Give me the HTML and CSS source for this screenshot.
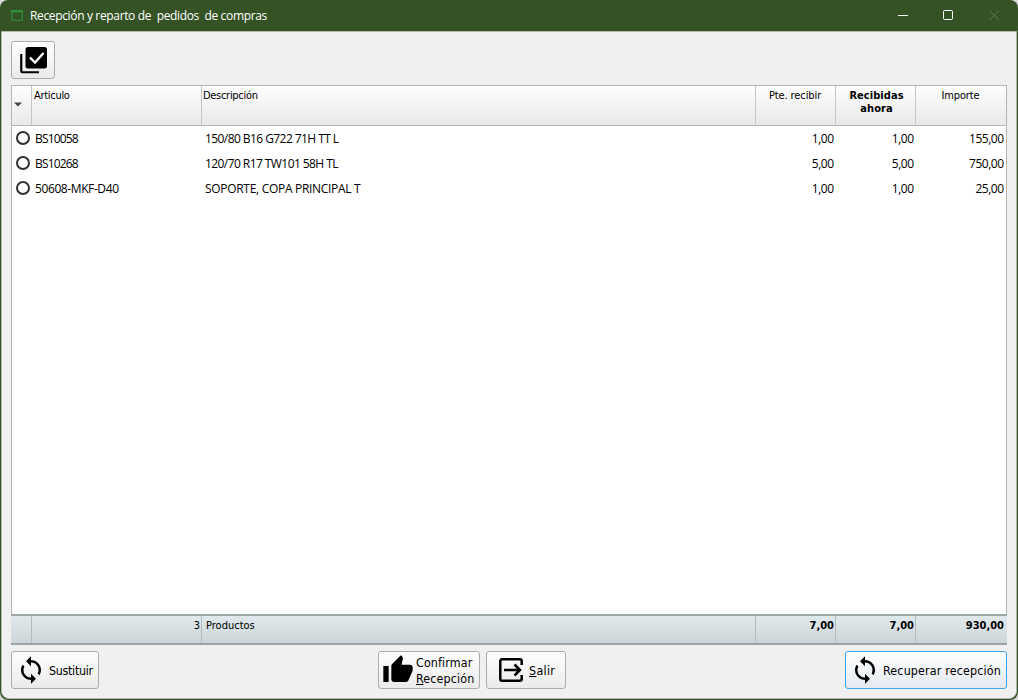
FILE: index.html
```html
<!DOCTYPE html>
<html lang="es">
<head>
<meta charset="utf-8">
<title>Recepción y reparto de pedidos de compras</title>
<link rel="stylesheet" href="styles.css">
</head>
<body>
<svg class="defs" width="0" height="0">
  <symbol id="sync" viewBox="0 0 24 24"><path d="M12 4V1L8 5l4 4V6c3.310 0 6 2.690 6 6 0 1.010-.25 1.970-.7 2.800l1.460 1.460C19.540 15.030 20 13.570 20 12c0-4.420-3.580-8-8-8zm0 14c-3.310 0-6-2.690-6-6 0-1.010.25-1.970.7-2.800L5.240 7.740C4.460 8.970 4 10.430 4 12c0 4.420 3.580 8 8 8v3l4-4-4-4v3z"/></symbol>
</svg>
<div class="window">
  <header class="titlebar">
    <svg class="app-icon" width="12" height="11" viewBox="0 0 12 11"><path d="M.75 1.500h10.500v8.750H.75z" fill="none" stroke="#328d3b" stroke-width="1.200"/><path d="M0 0h12v2.500H0z" fill="#328d3b"/></svg>
    <h1 class="title">Recepción y reparto de&nbsp; pedidos&nbsp; de compras</h1>
    <div class="controls">
      <svg width="46" height="31" viewBox="0 0 46 31"><path d="M18 15.500h10" stroke="#fff"/></svg>
      <svg width="46" height="31" viewBox="0 0 46 31"><rect x="17.500" y="10.500" width="9" height="9" rx="1" fill="none" stroke="#fff"/></svg>
      <svg width="46" height="31" viewBox="0 0 46 31"><path d="M17.500 10.500l9.500 9.500M27 10.500L17.500 20" stroke="#5c7650"/></svg>
    </div>
  </header>
  <main class="content">
    <button class="btn tool" aria-label="Marcar todo">
      <svg width="27" height="27" viewBox="0 0 27 27"><path d="M1.250 7v16.500a1.750 1.750 0 0 0 1.750 1.750H19" fill="none" stroke="#000" stroke-width="2.200"/><rect x="5.500" y="0" width="21.500" height="21.500" rx="2.500"/><path d="M10 10.500l5 5 8.500-9.500" fill="none" stroke="#fff" stroke-width="2.400"/></svg>
    </button>
    <section class="grid">
      <div class="row head">
        <div class="mark"><svg width="8" height="5" viewBox="0 0 8 5"><path d="M0 .5h8L4 4.500z" fill="#444"/></svg></div>
        <div class="articulo">Articulo</div>
        <div class="descripcion">Descripción</div>
        <div class="mid">Pte. recibir</div>
        <div class="mid strong">Recibidas<br>ahora</div>
        <div class="mid">Importe</div>
      </div>
      <div class="body">
        <div class="row item"><div><i class="ring"></i></div><div class="code">BS10058</div><div class="tire">150/80 B16 G722 71H TT L</div><div class="num">1,00</div><div class="num">1,00</div><div class="num">155,00</div></div>
        <div class="row item"><div><i class="ring"></i></div><div class="code">BS10268</div><div class="tire">120/70 R17 TW101 58H TL</div><div class="num">5,00</div><div class="num">5,00</div><div class="num">750,00</div></div>
        <div class="row item"><div><i class="ring"></i></div><div>50608-MKF-D40</div><div class="part">SOPORTE, COPA PRINCIPAL T</div><div class="num">1,00</div><div class="num">1,00</div><div class="num">25,00</div></div>
      </div>
      <div class="row foot"><div></div><div class="num">3</div><div class="prod">Productos</div><div class="num strong">7,00</div><div class="num strong">7,00</div><div class="num strong total">930,00</div></div>
    </section>
    <footer class="actions">
      <button class="btn replace"><svg width="30" height="30"><use href="#sync"/></svg><span>Sustituir</span></button>
      <button class="btn confirm">
        <svg width="32" height="32" viewBox="0 0 24 24"><path d="M1 21h4V9H1v12zm22-11c0-1.100-.9-2-2-2h-6.310l.95-4.570.03-.32c0-.41-.17-.79-.44-1.060L14.170 1 7.590 7.590C7.220 7.950 7 8.450 7 9v10c0 1.100.9 2 2 2h9c.83 0 1.540-.5 1.840-1.220l3.020-7.050c.09-.23.14-.47.14-.73v-2z"/></svg>
        <span>Confirmar<br><u>R</u>ecepción</span>
      </button>
      <button class="btn exit">
        <svg width="24" height="24" viewBox="0 0 24 24"><path d="M22.700 7V3a1.700 1.700 0 0 0-1.700-1.700H3A1.700 1.700 0 0 0 1.300 3v18A1.700 1.700 0 0 0 3 22.700h18a1.700 1.700 0 0 0 1.700-1.700v-4M5 12h16M15.500 6.500L21 12l-5.500 5.500" fill="none" stroke="#000" stroke-width="2.500"/></svg>
        <span><u>S</u>alir</span>
      </button>
      <button class="btn recover"><svg width="30" height="30"><use href="#sync"/></svg><span>Recuperar recepción</span></button>
    </footer>
  </main>
</div>
</body>
</html>
```
FILE: styles.css
```css
* { box-sizing: border-box; }
body { margin: 0; background: #d8d8d8; overflow: hidden; }
.defs { display: none; }
.window {
  display: flex; flex-direction: column;
  width: 1018px; height: 700px;
  padding: 0 1px 1px; overflow: hidden;
  background: #345224; border-radius: 8px;
  font: 11px/13px "DejaVu Sans Condensed", "DejaVu Sans", sans-serif; color: #000;
}
.titlebar { display: flex; align-items: center; height: 31px; flex: none; padding-left: 10px; }
.app-icon { margin-right: 7px; margin-top: -1px; }
.title { margin: 1px 0 0; flex: 1; color: #fff; font: 12px/16px "Open Sans", "Noto Sans", sans-serif; letter-spacing: -.35px; white-space: nowrap; }
.controls { display: flex; margin-right: -1px; }
.content {
  flex: 1; display: flex; flex-direction: column; min-height: 0;
  padding: 9px 9px 0; background: #f0f0f0;
  border: 1px solid #b5b8b3; border-radius: 0 0 8px 8px;
}
.btn {
  display: flex; align-items: center; flex: none; height: 38px; padding: 0;
  background: linear-gradient(#fefefe, #ebebeb);
  border: 1px solid #acacac; border-radius: 3px;
  color: #000; font: 12.400px/16px "DejaVu Sans Condensed", "DejaVu Sans", sans-serif;
  text-align: left; white-space: nowrap;
}
.btn svg { flex: none; }
.btn span { padding-top: 2px; }
.tool { width: 44px; padding-left: 7.500px; }
.grid { display: flex; flex-direction: column; height: 560px; margin-top: 6px; border: 1px solid #b5b5b5; border-bottom: 0; background: #fff; }
.row { display: grid; grid-template-columns: 20px 170px 554px 80px 80px 90px; flex: none; }
.head { height: 40px; background: linear-gradient(#fdfdfd, #e9e9e9); border-bottom: 1px solid #b5b5b5; }
.head > div { padding: 3px 2px 0 1px; border-right: 1px solid #c6c6c6; white-space: nowrap; }
.head > div:last-child { border-right: 0; }
.head .mark { padding: 11px 0 0 2px; }
.head .articulo { padding-left: 2px; letter-spacing: -.3px; }
.head .descripcion { letter-spacing: -.3px; }
.head .mid { text-align: center; letter-spacing: -.1px; }
.strong { font-weight: bold; }
.head .strong { padding: 3px 0 0 2px; letter-spacing: .05px; }
.body { flex: 1; }
.item { height: 25px; font: 12px/25px "Open Sans", "Noto Sans", sans-serif; letter-spacing: -.4px; white-space: nowrap; }
.item > div { padding-left: 3px; }
.item .code { letter-spacing: -.85px; }
.item .tire { letter-spacing: -.57px; }
.item .part { letter-spacing: -.3px; }
.ring { display: block; width: 14px; height: 14px; margin: 5px 0 0 1px; border: 2px solid #303030; border-radius: 50%; }
.item .num { padding-right: 2.500px; letter-spacing: -.5px; }
.num { text-align: right; }
.foot { height: 31px; margin: 0 -1px; padding: 0 1px; background: linear-gradient(#e0e9eb, #cdd5d8); border: solid #9aa5a7; border-width: 2px 0 2px; border-top-color: #9ea7a7; }
.foot > div { padding-top: 3px; border-right: 1px solid #b3bcbf; }
.foot > div:last-child { border-right: 0; }
.foot .num { padding-right: 1px; }
.foot .total { padding-right: 2px; }
.foot .prod { padding-left: 4px; }
.actions { display: flex; align-items: center; margin-top: 6px; }
.replace { width: 88px; padding-left: 4px; gap: 3px; letter-spacing: -.3px; }
.confirm { width: 102px; margin-left: 279px; padding-left: 3px; gap: 2px; letter-spacing: .12px; }
.exit { width: 80px; margin-left: 6px; padding-left: 12px; gap: 6px; letter-spacing: .3px; }
.recover { width: 162px; margin-left: auto; padding-left: 4px; gap: 3px; letter-spacing: .15px; border-color: #3ca5ef; background: linear-gradient(#fefefe, #e5eaf0); }
```
